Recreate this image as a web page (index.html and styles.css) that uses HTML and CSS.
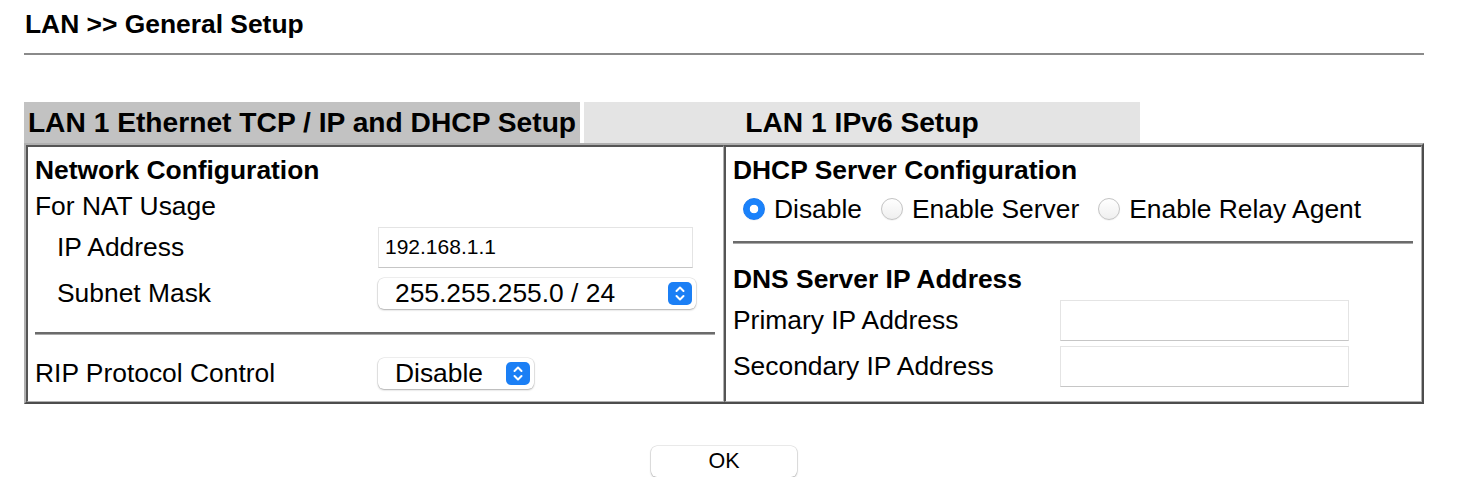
FILE: index.html
```html
<!DOCTYPE html>
<html>
<head>
<meta charset="utf-8">
<title>LAN General Setup</title>
<link rel="stylesheet" href="styles.css">
</head>
<body>
<div class="page">
  <h1 class="title">LAN &gt;&gt; General Setup</h1>
  <div class="rule"></div>
  <div class="tabs">
    <div class="tab active">LAN 1 Ethernet TCP / IP and DHCP Setup</div>
    <div class="tab">LAN 1 IPv6 Setup</div>
  </div>
  <div class="panel">
    <div class="cell left">
      <div class="heading">Network Configuration</div>
      <div class="line">For NAT Usage</div>
      <div class="row indent">
        <span class="label">IP Address</span>
        <input class="text ip" type="text" value="192.168.1.1">
      </div>
      <div class="row indent">
        <span class="label">Subnet Mask</span>
        <div class="select wide">
          <span>255.255.255.0 / 24</span>
          <svg class="stepper" width="24" height="23" viewBox="0 0 24 23"><rect width="24" height="23" rx="5" fill="#1b7ff5"/><path d="M8.5 9 L12 5.5 L15.5 9 M8.5 14 L12 17.5 L15.5 14" stroke="#fff" stroke-width="2" fill="none" stroke-linecap="round" stroke-linejoin="round"/></svg>
        </div>
      </div>
      <hr class="sep">
      <div class="row">
        <span class="label">RIP Protocol Control</span>
        <div class="select small">
          <span>Disable</span>
          <svg class="stepper" width="24" height="23" viewBox="0 0 24 23"><rect width="24" height="23" rx="5" fill="#1b7ff5"/><path d="M8.5 9 L12 5.5 L15.5 9 M8.5 14 L12 17.5 L15.5 14" stroke="#fff" stroke-width="2" fill="none" stroke-linecap="round" stroke-linejoin="round"/></svg>
        </div>
      </div>
    </div>
    <div class="cell right">
      <div class="heading">DHCP Server Configuration</div>
      <div class="radios">
        <label class="opt"><input class="radio" type="radio" name="dhcp" checked>Disable</label>
        <label class="opt"><input class="radio" type="radio" name="dhcp">Enable Server</label>
        <label class="opt"><input class="radio" type="radio" name="dhcp">Enable Relay Agent</label>
      </div>
      <hr class="sep sep-right">
      <div class="heading">DNS Server IP Address</div>
      <div class="row">
        <span class="label">Primary IP Address</span>
        <input class="text dns" type="text" value="">
      </div>
      <div class="row">
        <span class="label">Secondary IP Address</span>
        <input class="text dns" type="text" value="">
      </div>
    </div>
  </div>
  <div class="actions">
    <button class="ok" type="button">OK</button>
  </div>
</div>
</body>
</html>
```

FILE: styles.css
```css
body {
  margin: 0;
  font-family: "Liberation Sans", Arial, sans-serif;
  color: #000;
  background: #fff;
}

.page {
  width: 1400px;
  margin-left: 24px;
  padding-top: 9px;
}

.title {
  margin: 0;
  padding-left: 1px;
  font-size: 26.4px;
  line-height: 30px;
  font-weight: bold;
}

.rule {
  height: 2px;
  background: #8a8a8a;
  margin-top: 14px;
}

.tabs {
  display: flex;
  gap: 4px;
  margin-top: 47px;
}

.tab {
  width: 556px;
  height: 41px;
  line-height: 41px;
  text-align: center;
  font-weight: bold;
  font-size: 28.2px;
  background: #e4e4e4;
  white-space: nowrap;
}

.tab.active {
  background: #c2c2c2;
}

.panel {
  display: grid;
  grid-template-columns: 1fr 1fr;
  border: 2px solid;
  border-color: #b0b0b0 #4d4d4d #4d4d4d #b0b0b0;
}

.cell {
  border-style: solid;
  border-width: 2px 1px 1px 2px;
  border-color: #555 #b0b0b0 #b0b0b0 #555;
  padding: 5px 8px 5px 7px;
  font-size: 26.4px;
}

.heading {
  font-weight: bold;
  line-height: 36px;
}

.line {
  line-height: 36px;
}

.row {
  display: flex;
  align-items: center;
  height: 46px;
}

.label {
  flex: none;
  box-sizing: border-box;
  white-space: nowrap;
}

.left .label {
  width: 343px;
}

.indent .label {
  padding-left: 22px;
}

.right .label {
  width: 327px;
}

input.text {
  box-sizing: border-box;
  height: 41px;
  margin: 0;
  border: 1px solid #e4e4e4;
  border-bottom-color: #c6c6c6;
  background: #fff;
  font-family: "Liberation Sans", Arial, sans-serif;
  font-size: 21px;
  color: #000;
  padding: 0 6px;
  outline: none;
}

input.ip {
  width: 315px;
}

input.dns {
  width: 289px;
}

.select {
  display: flex;
  align-items: center;
  justify-content: space-between;
  box-sizing: border-box;
  height: 31px;
  padding: 0 4px 0 17px;
  border-radius: 6px;
  background: #fff;
  box-shadow: 0 0 0 0.5px rgba(0, 0, 0, 0.12), 0 1px 2px rgba(0, 0, 0, 0.28);
  font-size: 26.4px;
  white-space: nowrap;
}

.select.wide {
  width: 318px;
}

.select.small {
  width: 156px;
}

.stepper {
  display: block;
  flex: none;
}

.sep {
  height: 0;
  margin: 16px 0 15px;
  border: none;
  border-top: 2px solid #6b6b6b;
  border-bottom: 1px solid #a9a9a9;
}

.sep-right {
  margin: 11px 0 17px;
}

.radios {
  display: flex;
  align-items: center;
  height: 42px;
}

.opt {
  display: flex;
  align-items: center;
  white-space: nowrap;
}

.opt + .opt {
  margin-left: 9px;
}

.radio {
  appearance: none;
  -webkit-appearance: none;
  box-sizing: border-box;
  width: 22px;
  height: 22px;
  margin: 0 9px 0 10px;
  border-radius: 50%;
  border: 1px solid #c4c4c4;
  background: linear-gradient(#ffffff, #efefef);
  box-shadow: 0 0.5px 1px rgba(0, 0, 0, 0.08);
}

.radio:checked {
  border-color: #1a7af0;
  background: radial-gradient(circle, #fff 0 4px, #1a82fb 4.6px);
}

.actions {
  display: flex;
  justify-content: center;
  margin-top: 42px;
}

.ok {
  width: 146px;
  height: 31px;
  border: none;
  border-radius: 6px;
  background: #fff;
  box-shadow: 0 0 0 0.5px rgba(0, 0, 0, 0.15), 0 1px 2px rgba(0, 0, 0, 0.28);
  font-family: "Liberation Sans", Arial, sans-serif;
  font-size: 21.5px;
  color: #000;
  padding: 0;
}
```
